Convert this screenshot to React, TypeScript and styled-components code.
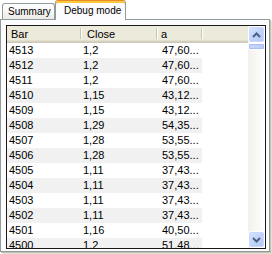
import React from "react";
import styled, { createGlobalStyle } from "styled-components";

const GlobalStyle = createGlobalStyle`
  html, body {
    margin: 0;
    padding: 0;
    background: #ffffff;
  }
`;

const Frame = styled.div`
  width: 272px;
  height: 254px;
  display: flex;
  flex-direction: column;
  font-family: "Liberation Sans", Arial, sans-serif;
  font-size: 11px;
  color: #000;
  background: #fff;
  overflow: hidden;
`;

const TabStrip = styled.div`
  height: 19px;
  display: flex;
  align-items: flex-start;
  padding-left: 2px;
`;

const Tab = styled.div<{ $active?: boolean }>`
  position: relative;
  z-index: ${({ $active }) => ($active ? 2 : 1)};
  box-sizing: border-box;
  height: ${({ $active }) => ($active ? "20px" : "16px")};
  margin-top: ${({ $active }) => ($active ? "0" : "3px")};
  padding: ${({ $active }) => ($active ? "3px 0 0 8px" : "1px 0 0 5px")};
  width: ${({ $active }) => ($active ? "71px" : "53px")};
  border: 1px solid #919b9c;
  border-bottom: none;
  border-top-color: ${({ $active }) => ($active ? "#e68b2c" : "#919b9c")};
  border-radius: 3px 3px 0 0;
  background: ${({ $active }) =>
    $active
      ? "#fcfcfe"
      : "linear-gradient(#ffffff 0%, #f7f7f4 50%, #ecebe5 100%)"};
  box-shadow: ${({ $active }) => ($active ? "inset 0 2px 0 #ffc73c" : "none")};
  font-size: 10px;
  white-space: nowrap;
  line-height: 13px;
`;

const Panel = styled.div`
  box-sizing: border-box;
  width: 270px;
  height: 233px;
  border: 1px solid #919b9c;
  background: #fcfcfe;
  padding: 5px 0 0 5px;
  box-shadow: 1px 1px 0 #c5c2b2, 2px 2px 0 #e3e1d7;
`;

const ListView = styled.div`
  box-sizing: border-box;
  width: 260px;
  height: 224px;
  border: 1px solid #1a1a1a;
  background: #fff;
  display: flex;
`;

const Grid = styled.div`
  flex: 1;
  overflow: hidden;
  display: flex;
  flex-direction: column;
`;

const HeaderRow = styled.div`
  flex: none;
  height: 17px;
  display: flex;
  background: #ebeadb;
  box-shadow: inset 0 -1px 0 #cbc7b8, inset 0 -2px 0 #d6d2c2,
    inset 0 -3px 0 #e2decd;
`;

const HeaderCell = styled.div<{ $w: number; $pad: number }>`
  position: relative;
  flex: none;
  box-sizing: border-box;
  width: ${({ $w }) => $w}px;
  padding-left: ${({ $pad }) => $pad}px;
  line-height: 17px;
  white-space: nowrap;

  &::after {
    content: "";
    position: absolute;
    right: -1px;
    top: 2px;
    bottom: 4px;
    width: 1px;
    background: #c7c5b2;
    border-right: 1px solid #ffffff;
  }
`;

const Cell = styled.div<{ $w: number; $pad: number }>`
  flex: none;
  box-sizing: border-box;
  width: ${({ $w }) => $w}px;
  padding-left: ${({ $pad }) => $pad}px;
  line-height: 15px;
  white-space: nowrap;
  overflow: hidden;
`;

const Row = styled.div<{ $alt: boolean }>`
  flex: none;
  height: 15px;
  display: flex;

  & > ${Cell} {
    background: ${({ $alt }) => ($alt ? "#f1f1f1" : "transparent")};
  }
`;

const Scrollbar = styled.div`
  flex: none;
  width: 17px;
  display: flex;
  flex-direction: column;
  background: linear-gradient(90deg, #f3f1ec, #fefefe);
`;

const ScrollButton = styled.div`
  flex: none;
  box-sizing: border-box;
  height: 17px;
  border: 1px solid #ffffff;
  border-radius: 3px;
  background: linear-gradient(135deg, #dbe6fe 0%, #c1d3fb 50%, #b4c8f6 100%);
  box-shadow: inset 0 0 0 1px #c8d7fb;
  display: flex;
  align-items: center;
  justify-content: center;
`;

const Thumb = styled.div`
  flex: none;
  box-sizing: border-box;
  height: 7px;
  border: 1px solid #ffffff;
  border-radius: 2px;
  background: linear-gradient(90deg, #c9d8fc, #b9cbf7);
  box-shadow: inset 0 0 0 1px #a8bdf1;
`;

const Track = styled.div`
  flex: 1;
`;

const Arrow: React.FC<{ up?: boolean }> = ({ up }) => (
  <svg width="9" height="6" viewBox="0 0 9 6">
    <polyline
      points={up ? "1,5 4.5,1.5 8,5" : "1,1 4.5,4.5 8,1"}
      fill="none"
      stroke="#4d6185"
      strokeWidth="2"
    />
  </svg>
);

const columns = [
  { title: "Bar", w: 74, headPad: 4, cellPad: 2 },
  { title: "Close", w: 76, headPad: 6, cellPad: 2 },
  { title: "a", w: 45, headPad: 4, cellPad: 5 },
];

const rows = [
  ["4513", "1,2", "47,60..."],
  ["4512", "1,2", "47,60..."],
  ["4511", "1,2", "47,60..."],
  ["4510", "1,15", "43,12..."],
  ["4509", "1,15", "43,12..."],
  ["4508", "1,29", "54,35..."],
  ["4507", "1,28", "53,55..."],
  ["4506", "1,28", "53,55..."],
  ["4505", "1,11", "37,43..."],
  ["4504", "1,11", "37,43..."],
  ["4503", "1,11", "37,43..."],
  ["4502", "1,11", "37,43..."],
  ["4501", "1,16", "40,50..."],
  ["4500", "1,2", "51,48..."],
];

const App: React.FC = () => {
  return (
    <Frame>
      <GlobalStyle />
      <TabStrip>
        <Tab>Summary</Tab>
        <Tab $active>Debug mode</Tab>
      </TabStrip>
      <Panel>
        <ListView>
          <Grid>
            <HeaderRow>
              {columns.map((col) => (
                <HeaderCell key={col.title} $w={col.w} $pad={col.headPad}>
                  {col.title}
                </HeaderCell>
              ))}
            </HeaderRow>
            {rows.map((row, i) => (
              <Row key={row[0]} $alt={i % 2 === 1}>
                {row.map((value, j) => (
                  <Cell key={j} $w={columns[j].w} $pad={columns[j].cellPad}>
                    {value}
                  </Cell>
                ))}
              </Row>
            ))}
          </Grid>
          <Scrollbar>
            <ScrollButton>
              <Arrow up />
            </ScrollButton>
            <Thumb />
            <Track />
            <ScrollButton>
              <Arrow />
            </ScrollButton>
          </Scrollbar>
        </ListView>
      </Panel>
    </Frame>
  );
};

export default App;
